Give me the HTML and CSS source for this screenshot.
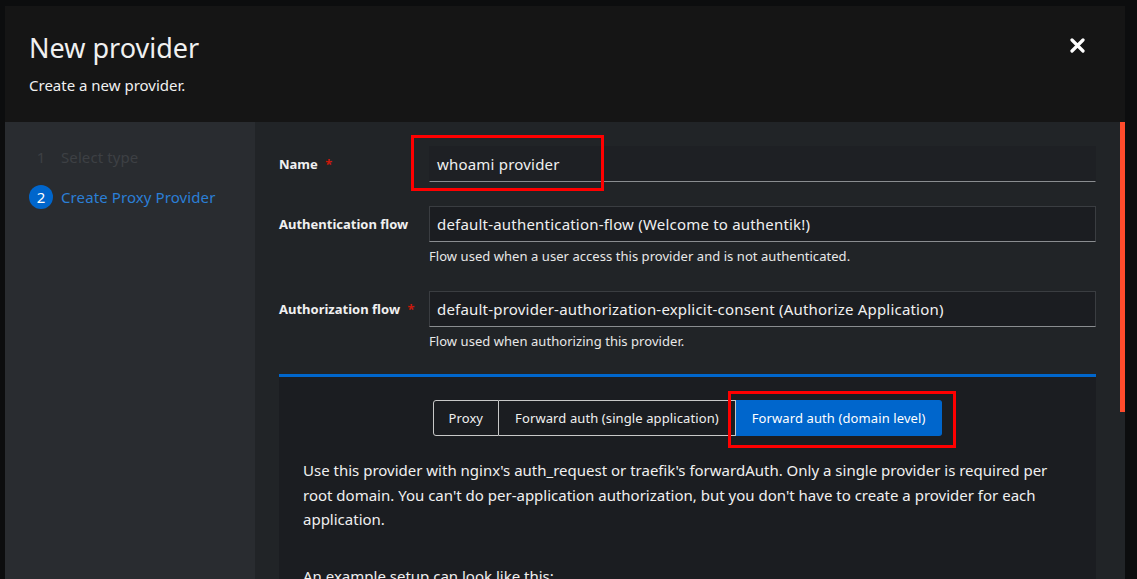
FILE: index.html
```html
<!DOCTYPE html>
<html lang="en">
<head>
<meta charset="utf-8">
<title>New provider</title>
<link rel="stylesheet" href="styles.css">
</head>
<body>
<div class="modal">
  <header class="modal-header">
    <div class="titles">
      <h1 class="title">New provider</h1>
      <p class="subtitle">Create a new provider.</p>
    </div>
    <button class="close" aria-label="Close">
      <svg width="15" height="15" viewBox="0 0 15 15"><path d="M2 2 L13 13 M13 2 L2 13" stroke="#fff" stroke-width="3.2" stroke-linecap="round"/></svg>
    </button>
  </header>
  <div class="modal-body">
    <nav class="steps">
      <div class="step disabled"><span class="num">1</span><span class="step-label">Select type</span></div>
      <div class="step current"><span class="num">2</span><span class="step-label">Create Proxy Provider</span></div>
    </nav>
    <main class="main">
      <div class="content">
        <div class="row">
          <label class="label">Name <span class="req">*</span></label>
          <div class="field">
            <div class="input focus">whoami provider<span class="annot annot-name"></span></div>
          </div>
        </div>
        <div class="row">
          <label class="label">Authentication flow</label>
          <div class="field">
            <div class="input">default-authentication-flow (Welcome to authentik!)</div>
            <p class="helper">Flow used when a user access this provider and is not authenticated.</p>
          </div>
        </div>
        <div class="row">
          <label class="label">Authorization flow <span class="req">*</span></label>
          <div class="field">
            <div class="input">default-provider-authorization-explicit-consent (Authorize Application)</div>
            <p class="helper">Flow used when authorizing this provider.</p>
          </div>
        </div>
        <section class="card">
          <div class="toggle">
            <button class="tbtn">Proxy</button>
            <button class="tbtn">Forward auth (single application)</button>
            <button class="tbtn selected">Forward auth (domain level)<span class="annot annot-tab"></span></button>
          </div>
          <p class="desc">Use this provider with nginx's auth_request or traefik's forwardAuth. Only a single provider is required per root domain. You can't do per-application authorization, but you don't have to create a provider for each application.</p>
          <p class="desc">An example setup can look like this:</p>
        </section>
      </div>
      <div class="scrolltrack"><div class="thumb"></div></div>
    </main>
  </div>
</div>
</body>
</html>
```
FILE: styles.css
```css
* { box-sizing: border-box; }
html, body { margin: 0; height: 100%; }
body {
  background: #0c0d0e;
  font-family: "Noto Sans", "Open Sans", sans-serif;
  color: #f0f0f0;
  overflow: hidden;
}
.modal {
  margin: 6px 0 0 5px;
  width: 1120px;
  height: 573px;
  display: flex;
  flex-direction: column;
  overflow: hidden;
}
.modal-header {
  background: #151515;
  height: 116px;
  flex: none;
  display: flex;
  justify-content: space-between;
  padding: 24px 40px 0 24px;
}
.title {
  margin: 0;
  font-size: 27px;
  font-weight: 400;
  line-height: 36px;
  letter-spacing: 0;
}
.subtitle {
  margin: 7px 0 0;
  font-size: 15px;
  line-height: 24px;
}
.close {
  background: none;
  border: 0;
  padding: 0;
  margin-top: 8px;
  width: 15px;
  height: 15px;
  cursor: pointer;
}
.modal-body {
  flex: 1;
  display: flex;
  min-height: 0;
}
.steps {
  width: 250px;
  background: #292c30;
  padding: 23px 0 0 24px;
  flex: none;
}
.step {
  display: flex;
  align-items: center;
  height: 24px;
  margin-bottom: 16px;
  font-size: 15px;
  letter-spacing: 0.1px;
}
.step .num {
  width: 24px;
  height: 24px;
  display: flex;
  align-items: center;
  justify-content: center;
  margin-right: 8px;
  border-radius: 50%;
  font-size: 15px;
}
.step.disabled { color: #3d4044; }
.step.current { color: #2b7fd6; }
.step.current .num { background: #0066cc; color: #fff; }
.main {
  flex: 1;
  background: #212427;
  display: flex;
  min-width: 0;
}
.content {
  flex: 1;
  padding: 24px 24px 0 24px;
  min-width: 0;
}
.row {
  display: flex;
  margin-bottom: 24px;
}
.row:nth-child(2) { margin-bottom: 26px; }
.label {
  width: 150px;
  flex: none;
  font-size: 13px;
  font-weight: 700;
  line-height: 36px;
}
.req { color: #c9190b; margin-left: 4px; }
.field { flex: 1; }
.input {
  position: relative;
  height: 36px;
  background: #1b1d21;
  border: 1px solid #3a3d41;
  border-bottom-color: #8a8d90;
  padding: 0 7px;
  font-size: 15px;
  line-height: 34px;
  letter-spacing: 0.2px;
  white-space: nowrap;
}
.input.focus { border-color: #1e2024; border-bottom-color: #8a8d90; background: #1e2024; }
.helper {
  margin: 5px 0 0;
  font-size: 13px;
  line-height: 18px;
  letter-spacing: 0.05px;
  color: #e8e8e8;
}
.card {
  background: #1b1d21;
  border-top: 3px solid #0066cc;
  padding: 23px 24px 0 24px;
  margin-top: 2px;
  height: 300px;
}
.toggle {
  display: flex;
  justify-content: center;
}
.tbtn {
  position: relative;
  height: 36px;
  background: #1b1d21;
  color: #f0f0f0;
  border: 1px solid #c8c8c8;
  border-left-width: 0;
  font-family: inherit;
  font-size: 13px;
  padding: 0 16px;
  letter-spacing: 0.1px;
}
.tbtn:first-child { border-left-width: 1px; border-radius: 3px 0 0 3px; padding: 0 15px; }
.tbtn.selected {
  background: #0066cc;
  border-color: #0066cc;
  border-radius: 0 3px 3px 0;
  color: #fff;
}
.desc {
  margin: 22px 0 0;
  font-size: 15px;
  line-height: 24.5px;
  letter-spacing: 0;
}
.desc + .desc { margin-top: 32px; }
.annot {
  position: absolute;
  border: 3px solid #ff0000;
  pointer-events: none;
}
.annot-name { left: -19px; top: -12px; width: 193px; height: 56px; }
.annot-tab { left: -8px; top: -10px; width: 228px; height: 57px; }
.scrolltrack {
  width: 5px;
  flex: none;
}
.thumb {
  height: 290px;
  background: #ff4b2c;
}
```
